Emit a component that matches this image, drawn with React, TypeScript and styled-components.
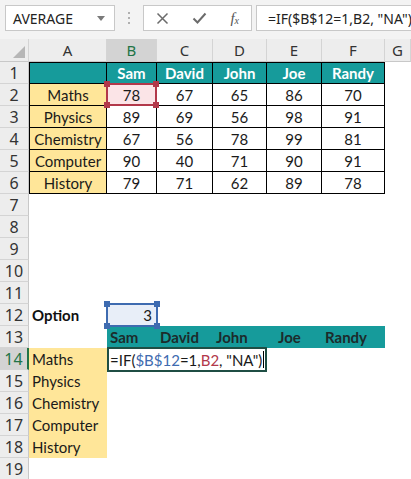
import React from 'react';
import styled, { createGlobalStyle } from 'styled-components';

const GlobalStyle = createGlobalStyle`
  body {
    margin: 0;
    background: #ffffff;
    overflow: hidden;
  }
`;

const subjects = ['Maths', 'Physics', 'Chemistry', 'Computer', 'History'];
const names = ['Sam', 'David', 'John', 'Joe', 'Randy'];
const bandPads = [3, 3, 3, 11, 3];
const scores = [
  [78, 67, 65, 86, 70],
  [89, 69, 56, 98, 91],
  [67, 56, 78, 99, 81],
  [90, 40, 71, 90, 91],
  [79, 71, 62, 89, 78],
];
const letters = ['A', 'B', 'C', 'D', 'E', 'F', 'G'];

const RefFrame = ({ color }: { color: string }) => (
  <RefBox $color={color}>
    <Handle $color={color} $x="left" $y="top" />
    <Handle $color={color} $x="right" $y="top" />
    <Handle $color={color} $x="left" $y="bottom" />
    <Handle $color={color} $x="right" $y="bottom" />
  </RefBox>
);

const App = () => {
  return (
    <Page>
      <GlobalStyle />
      <Toolbar>
        <NameBox>
          <span>AVERAGE</span>
          <svg width="8" height="5" viewBox="0 0 8 5">
            <path d="M0 0 L8 0 L4 5 Z" fill="#7a7a7a" />
          </svg>
        </NameBox>
        <Dots>
          <i />
          <i />
          <i />
        </Dots>
        <ButtonsBox>
          <svg width="13" height="13" viewBox="0 0 13 13">
            <path d="M1.5 1.5 L11.5 11.5 M11.5 1.5 L1.5 11.5" stroke="#6b6b6b" strokeWidth="1.5" />
          </svg>
          <svg width="15" height="12" viewBox="0 0 15 12">
            <path d="M1.5 6.5 L5.5 10.5 L13.5 1.5" stroke="#6b6b6b" strokeWidth="2" fill="none" />
          </svg>
          <Fx>
            f<sub>x</sub>
          </Fx>
        </ButtonsBox>
        <FormulaBox>=IF($B$12=1,B2, "NA")</FormulaBox>
      </Toolbar>

      <Sheet>
        <Corner>
          <svg width="12" height="12" viewBox="0 0 12 12">
            <path d="M12 0 L12 12 L0 12 Z" fill="#b6b6b6" />
          </svg>
        </Corner>
        {letters.map((l) => (
          <ColHead key={l} $active={l === 'B'}>
            {l}
          </ColHead>
        ))}

        <RowHead>1</RowHead>
        <TableHead $left />
        {names.map((n) => (
          <TableHead key={n}>{n}</TableHead>
        ))}
        <Blank />

        {subjects.map((s, i) => (
          <React.Fragment key={s}>
            <RowHead>{i + 2}</RowHead>
            <SubjectCell>{s}</SubjectCell>
            {scores[i].map((v, j) => (
              <ScoreCell key={j} $ref={i === 0 && j === 0}>
                {v}
                {i === 0 && j === 0 && <RefFrame color="#b2384a" />}
              </ScoreCell>
            ))}
            <Blank />
          </React.Fragment>
        ))}

        {[7, 8, 9, 10, 11].map((r) => (
          <React.Fragment key={r}>
            <RowHead>{r}</RowHead>
            <Blank $span={7} />
          </React.Fragment>
        ))}

        <RowHead>12</RowHead>
        <OptionLabel>Option</OptionLabel>
        <OptionCell>
          3
          <RefFrame color="#3e6bb0" />
        </OptionCell>
        <Blank $span={5} />

        <RowHead>13</RowHead>
        <Blank />
        {names.map((n, i) => (
          <BandCell key={n} $pad={bandPads[i]}>
            {n}
          </BandCell>
        ))}
        <Blank />

        <RowHead $active>14</RowHead>
        <ListCell>{subjects[0]}</ListCell>
        <EditCell>
          =IF(<Blue>$B$12</Blue>=1,<Red>B2</Red>, "NA")<Caret />
        </EditCell>
        <Blank $span={3} />

        {subjects.slice(1).map((s, i) => (
          <React.Fragment key={s}>
            <RowHead>{i + 15}</RowHead>
            <ListCell>{s}</ListCell>
            <Blank $span={6} />
          </React.Fragment>
        ))}

        <RowHead>19</RowHead>
        <Blank $span={7} />
      </Sheet>
    </Page>
  );
};

const Page = styled.div`
  width: 411px;
  height: 479px;
  overflow: hidden;
  font-family: Lato, 'Liberation Sans', sans-serif;
  color: #1a1a1a;
`;

const Toolbar = styled.div`
  height: 39px;
  box-sizing: border-box;
  background: #f3f3f3;
  display: flex;
  align-items: flex-start;
  padding: 5px 0 0 5px;
`;

const BoxBase = styled.div`
  height: 26px;
  box-sizing: border-box;
  background: #ffffff;
  border: 1px solid #c8c8c8;
  display: flex;
  align-items: center;
  font-family: 'Noto Sans', 'Open Sans', sans-serif;
  font-size: 14px;
  color: #222;
  white-space: nowrap;
  overflow: hidden;
`;

const NameBox = styled(BoxBase)`
  width: 110px;
  padding: 0 9px 0 7px;
  justify-content: space-between;
`;

const Dots = styled.div`
  width: 28px;
  height: 26px;
  display: flex;
  flex-direction: column;
  align-items: center;
  justify-content: center;
  gap: 3px;
  & > i {
    width: 2px;
    height: 2px;
    background: #b0b0b0;
  }
`;

const ButtonsBox = styled(BoxBase)`
  width: 109px;
  padding: 0 12px 0 12px;
  justify-content: space-between;
`;

const Fx = styled.span`
  font-family: 'Liberation Serif', serif;
  font-style: italic;
  font-size: 15px;
  color: #555;
  & > sub {
    font-size: 10px;
    vertical-align: -1px;
  }
`;

const FormulaBox = styled(BoxBase)`
  flex: 1;
  margin-left: 4px;
  border-right: none;
  padding-left: 11px;
  font-size: 14px;
`;

const Sheet = styled.div`
  display: grid;
  grid-template-columns: 29px 78px 50px 56px 54px 55px 63px 26px;
  grid-template-rows: 23px;
  grid-auto-rows: 22px;
  font-size: 15px;
`;

const Corner = styled.div`
  background: #ededed;
  border-right: 1px solid #d4d4d4;
  border-bottom: 1px solid #c8c8c8;
  box-sizing: border-box;
  display: flex;
  align-items: flex-end;
  justify-content: flex-end;
  padding: 0 3px 3px 0;
`;

const ColHead = styled.div<{ $active?: boolean }>`
  background: ${(p) => (p.$active ? '#d3d3d3' : '#ededed')};
  color: ${(p) => (p.$active ? '#217346' : '#333')};
  border-right: 1px solid #d4d4d4;
  border-bottom: 1px solid #c8c8c8;
  box-sizing: border-box;
  display: flex;
  align-items: center;
  justify-content: center;
  font-family: 'Noto Sans', 'Open Sans', sans-serif;
  font-size: 15px;
`;

const RowHead = styled.div<{ $active?: boolean }>`
  background: ${(p) => (p.$active ? '#d3d3d3' : '#ededed')};
  color: ${(p) => (p.$active ? '#217346' : '#333')};
  border-bottom: 1px solid #d4d4d4;
  border-right: ${(p) => (p.$active ? '2px solid #217346' : '1px solid #c8c8c8')};
  box-sizing: border-box;
  display: flex;
  align-items: center;
  justify-content: center;
  font-family: 'Noto Sans', 'Open Sans', sans-serif;
  font-size: 16px;
`;

const Blank = styled.div<{ $span?: number }>`
  grid-column: span ${(p) => p.$span ?? 1};
`;

const TableCell = styled.div<{ $left?: boolean }>`
  box-sizing: border-box;
  border-right: 1px solid #000;
  border-bottom: 1px solid #000;
  border-left: ${(p) => (p.$left ? '1px solid #000' : 'none')};
  display: flex;
  align-items: center;
  justify-content: center;
  position: relative;
`;

const TableHead = styled(TableCell)`
  background: #169b9b;
  color: #ffffff;
  font-weight: 700;
  border-top: 1px solid #000;
`;

const SubjectCell = styled(TableCell)`
  background: #ffe699;
  border-left: 1px solid #000;
`;

const ScoreCell = styled(TableCell)<{ $ref?: boolean }>`
  background: ${(p) => (p.$ref ? '#fbe4e7' : '#ffffff')};
`;

const RefBox = styled.span<{ $color: string }>`
  position: absolute;
  inset: -1px;
  border: 2px solid ${(p) => p.$color};
  pointer-events: none;
  z-index: 2;
`;

const Handle = styled.span<{ $color: string; $x: 'left' | 'right'; $y: 'top' | 'bottom' }>`
  position: absolute;
  width: 6px;
  height: 6px;
  background: ${(p) => p.$color};
  ${(p) => p.$x}: -4px;
  ${(p) => p.$y}: -4px;
`;

const OptionLabel = styled.div`
  display: flex;
  align-items: center;
  padding-left: 3px;
  font-weight: 700;
  font-size: 15px;
  color: #111;
`;

const OptionCell = styled.div`
  position: relative;
  background: #e8eef8;
  display: flex;
  align-items: center;
  justify-content: flex-end;
  padding-right: 5px;
`;

const BandCell = styled.div<{ $pad: number }>`
  background: #169b9b;
  color: #1c2b2b;
  font-weight: 700;
  display: flex;
  align-items: center;
  padding-left: ${(p) => p.$pad}px;
`;

const ListCell = styled.div`
  background: #ffe699;
  display: flex;
  align-items: center;
  padding-left: 3px;
`;

const EditCell = styled.div`
  grid-column: span 3;
  position: relative;
  z-index: 1;
  margin: -1px 0 -2px 0;
  box-sizing: border-box;
  border: 2px solid #1f4e44;
  background: #ffffff;
  display: flex;
  align-items: center;
  padding-left: 1px;
  white-space: nowrap;
  font-size: 15px;
`;

const Blue = styled.span`
  color: #3e6bb0;
`;

const Red = styled.span`
  color: #b2384a;
`;

const Caret = styled.span`
  display: inline-block;
  width: 1px;
  height: 17px;
  margin-left: 1px;
  background: #000;
`;

export default App;
